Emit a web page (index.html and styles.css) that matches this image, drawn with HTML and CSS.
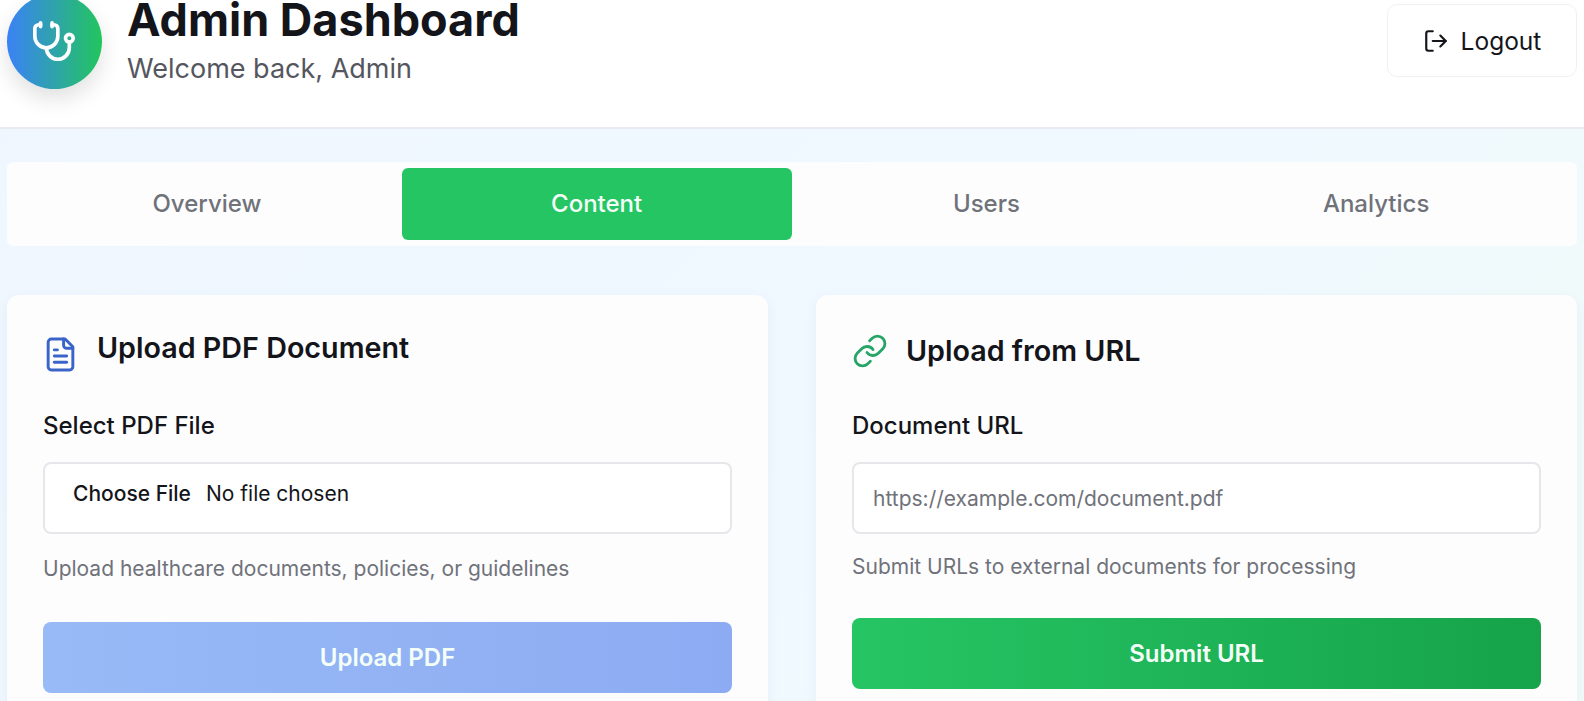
FILE: index.html
```html
<!DOCTYPE html>
<html lang="en">
<head>
<meta charset="utf-8">
<title>Admin Dashboard</title>
<link rel="stylesheet" href="styles.css">
</head>
<body>
<header class="header">
  <div class="brand">
    <div class="avatar">
      <svg class="avatar-icon" viewBox="0 0 24 24"><path d="M11 2v2"/><path d="M5 2v2"/><path d="M5 3H4a2 2 0 0 0-2 2v4a6 6 0 0 0 12 0V5a2 2 0 0 0-2-2h-1"/><path d="M8 15a6 6 0 0 0 12 0v-3"/><circle cx="20" cy="10" r="2"/></svg>
    </div>
    <div class="brand-text">
      <h1 class="title">Admin Dashboard</h1>
      <p class="subtitle">Welcome back, Admin</p>
    </div>
  </div>
  <button class="logout" type="button">
    <svg class="logout-icon" viewBox="0 0 24 24"><path d="M9 21H5a2 2 0 0 1-2-2V5a2 2 0 0 1 2-2h4"/><path d="m16 17 5-5-5-5"/><path d="M21 12H9"/></svg>
    Logout
  </button>
</header>
<main class="main">
  <nav class="tabs">
    <div class="tab">Overview</div>
    <div class="tab tab-active">Content</div>
    <div class="tab">Users</div>
    <div class="tab">Analytics</div>
  </nav>
  <section class="cards">
    <article class="card">
      <div class="card-head card-head-pdf">
        <svg class="card-icon icon-blue" viewBox="0 0 24 24"><path d="M15 2H6a2 2 0 0 0-2 2v16a2 2 0 0 0 2 2h12a2 2 0 0 0 2-2V7Z"/><path d="M14 2v4a2 2 0 0 0 2 2h4"/><path d="M10 9H8"/><path d="M16 13H8"/><path d="M16 17H8"/></svg>
        <h2 class="card-title">Upload PDF Document</h2>
      </div>
      <div class="label">Select PDF File</div>
      <div class="field field-file"><span class="file-btn">Choose File</span><span class="file-name">No file chosen</span></div>
      <p class="hint hint-pdf">Upload healthcare documents, policies, or guidelines</p>
      <button class="btn btn-blue" type="button">Upload PDF</button>
    </article>
    <article class="card">
      <div class="card-head card-head-url">
        <svg class="card-icon icon-green" viewBox="0 0 24 24"><path d="M10 13a5 5 0 0 0 7.54.54l3-3a5 5 0 0 0-7.07-7.07l-1.72 1.71"/><path d="M14 11a5 5 0 0 0-7.54-.54l-3 3a5 5 0 0 0 7.07 7.07l1.71-1.71"/></svg>
        <h2 class="card-title">Upload from URL</h2>
      </div>
      <div class="label">Document URL</div>
      <div class="field field-url"><span class="placeholder">https://example.com/document.pdf</span></div>
      <p class="hint hint-url">Submit URLs to external documents for processing</p>
      <button class="btn btn-green" type="button">Submit URL</button>
    </article>
  </section>
</main>
</body>
</html>
```
FILE: styles.css
```css
* { box-sizing: border-box; }
html, body { margin: 0; height: 100%; overflow: hidden; }
body {
  font-family: Inter, "Liberation Sans", sans-serif;
  background: linear-gradient(135deg, #eff6ff 0%, #f0f9ff 60%, #f0fbf8 100%);
  color: #14151a;
}
svg { fill: none; stroke: currentColor; stroke-linecap: round; stroke-linejoin: round; stroke-width: 2; flex: none; }

.header {
  height: 129px;
  background: #fff;
  border-bottom: 2px solid #e8ebf0;
  display: flex;
  justify-content: space-between;
  align-items: flex-start;
  padding: 0 7px;
}
.brand { display: flex; gap: 25px; margin-top: -6px; }
.avatar {
  width: 95px; height: 95px; border-radius: 50%;
  background: linear-gradient(90deg, #3b82f6, #22c55e);
  box-shadow: 0 10px 22px rgba(0, 0, 0, .12);
  display: flex; align-items: center; justify-content: center;
  color: #fff;
}
.avatar-icon { width: 46px; height: 46px; stroke-width: 1.9; margin-left: -2px; }
.brand-text { padding-top: 6px; }
.title { margin: 0; font-size: 45px; line-height: 40px; font-weight: 700; color: #14151a; }
.subtitle { margin: 10px 0 0; font-size: 27px; line-height: 38px; color: #55565e; }

.logout {
  margin-top: 4px;
  width: 190px; height: 73px;
  background: #fff;
  border: 1px solid #f0f1f4;
  border-radius: 10px;
  display: flex; align-items: center; justify-content: center; gap: 12px;
  font: 400 24.5px Inter, sans-serif;
  color: #14151a;
}
.logout-icon { width: 26px; height: 26px; }

.main { padding: 33px 7px 0; }
.tabs {
  height: 84px;
  background: #fdfdfe;
  display: grid;
  grid-template-columns: repeat(4, 1fr);
  padding: 6px 6px 0 5px;
  border-radius: 6px;
}
.tab {
  height: 72px;
  display: flex; align-items: center; justify-content: center;
  font-size: 24px; font-weight: 500; color: #70727a;
  border-radius: 6px;
  padding-bottom: 2px;
}
.tab-active { background: #26c564; color: #f4fff8; }

.cards { display: grid; grid-template-columns: 1fr 1fr; gap: 48px; margin-top: 49px; }
.card {
  height: 420px;
  background: #fdfdfe;
  border-radius: 12px;
  padding: 0 36px;
  box-shadow: 0 4px 14px rgba(30, 60, 120, .05);
}
.card-head { display: flex; height: 105px; }
.card-head-pdf { padding-top: 41px; gap: 18px; margin-left: -1px; }
.card-head-url { padding-top: 38px; gap: 18px; }
.card-icon { stroke-width: 1.9; }
.icon-blue { color: #3b64c8; width: 37px; height: 37px; }
.icon-green { color: #27a567; width: 36px; height: 36px; }
.card-title { margin: 0; font-size: 28.7px; line-height: 36px; font-weight: 600; color: #14151a; }
.card-head-pdf .card-title { margin-top: -6px; }
.card-head-url .card-title { margin-top: 0; }

.label { font-size: 24px; line-height: 40px; font-weight: 450; color: #14151a; margin-top: 6px; }
.field {
  margin-top: 16px;
  height: 72px;
  background: #fff;
  border: 2px solid #e5e7eb;
  border-radius: 8px;
  display: flex;
}
.field-file { padding: 14px 0 0 28px; font-size: 21px; line-height: 32px; gap: 15px; color: #14151a; }
.file-btn { font-weight: 500; }
.field-url { padding: 0 19px; align-items: center; }
.placeholder { font-size: 21px; color: #70727a; }
.hint { margin: 0; font-size: 21px; line-height: 30px; color: #70727a; }
.hint-pdf { margin-top: 20px; }
.hint-url { margin-top: 18px; }
.btn {
  display: block; width: 100%; height: 71px; border: 0; border-radius: 8px;
  font: 600 24px Inter, sans-serif; color: #f4fff8;
}
.btn-blue { margin-top: 38px; background: linear-gradient(90deg, #98baf6, #8dabf2); }
.btn-green { margin-top: 36px; background: linear-gradient(90deg, #26c564, #16a34a); }
```
